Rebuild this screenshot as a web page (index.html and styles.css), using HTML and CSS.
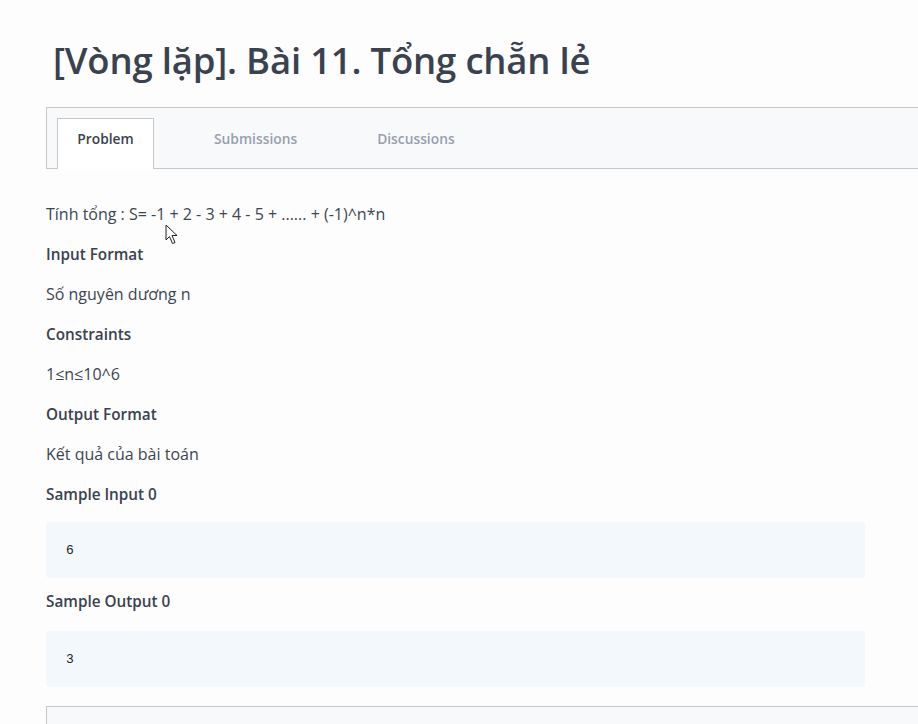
FILE: index.html
```html
<!DOCTYPE html>
<html lang="vi">
<head>
<meta charset="utf-8">
<title>[Vòng lặp]. Bài 11. Tổng chẵn lẻ</title>
<link rel="stylesheet" href="styles.css">
</head>
<body>
<div class="page">
  <h1 class="title">[Vòng lặp]. Bài 11. Tổng chẵn lẻ</h1>
  <div class="tabs">
    <div class="tab active">Problem</div>
    <div class="tab">Submissions</div>
    <div class="tab">Discussions</div>
  </div>
  <div class="content">
    <p class="line">Tính tổng : S= -1 + 2 - 3 + 4 - 5 + ...... + (-1)^n*n</p>
    <p class="line heading">Input Format</p>
    <p class="line">Số nguyên dương n</p>
    <p class="line heading">Constraints</p>
    <p class="line">1≤n≤10^6</p>
    <p class="line heading">Output Format</p>
    <p class="line">Kết quả của bài toán</p>
    <p class="line heading">Sample Input 0</p>
    <pre class="sample">6</pre>
    <p class="line heading">Sample Output 0</p>
    <pre class="sample">3</pre>
  </div>
  <div class="editor"></div>
</div>
<svg class="cursor" width="14" height="22" viewBox="0 0 14 22">
  <path d="M1 1 L1 16 L4.5 12.5 L7.5 19.5 L10 18.5 L7 11.5 L12 11.5 Z" fill="#fff" stroke="#222" stroke-width="1" stroke-linejoin="round"/>
</svg>
</body>
</html>
```
FILE: styles.css
```css
html, body {
  margin: 0;
  padding: 0;
  background: #fdfdfe;
  font-family: "Open Sans", "Noto Sans", sans-serif;
  color: #39424e;
}
.page {
  padding-left: 46px;
  overflow: hidden;
  height: 724px;
  box-sizing: border-box;
}
.title {
  margin: 0;
  padding: 38px 0 0 7px;
  font-size: 36.5px;
  line-height: 44px;
  font-weight: 600;
  color: #39424e;
  letter-spacing: -0.2px;
}
.tabs {
  margin-top: 25px;
  height: 50px;
  border: 1px solid #c8c8c8;
  border-right: none;
  background: #f8f9fa;
  padding: 10px 0 0 10px;
  display: flex;
  gap: 40px;
  align-items: stretch;
}
.tab {
  padding: 11px 20px 0 20px;
  font-size: 13.8px;
  line-height: 19px;
  font-weight: 600;
  color: #979faf;
  height: 50px;
  box-sizing: border-box;
}
.tab.active {
  color: #39424e;
  background: #fff;
  border: 1px solid #c8c8c8;
  border-bottom: none;
  height: 51px;
  margin-bottom: -1px;
  width: 97px;
  text-align: center;
  padding: 10px 0 0 0;
}
.content {
  width: 819px;
  padding-top: 35px;
}
.line {
  margin: 0 0 20px 0;
  font-size: 16px;
  line-height: 20px;
  color: #3c4550;
}
.heading {
  font-weight: 600;
  font-size: 15.3px;
  color: #39424e;
}
.sample {
  margin: -2px 0 13px 0;
  height: 56px;
  background: #f3f8fd;
  border-radius: 3px;
  padding: 0 0 0 20px;
  display: flex;
  align-items: center;
  font-family: "Liberation Mono", "DejaVu Sans Mono", monospace;
  font-size: 13px;
  color: #1a1a1a;
}
.sample + .line {
  margin-top: 0;
  margin-bottom: 22px;
}
.editor {
  margin-top: 19px;
  height: 40px;
  border: 1px solid #c8c8c8;
  border-right: none;
  background: #f8f9fa;
}
.cursor {
  position: absolute;
  left: 165px;
  top: 224px;
}
```
